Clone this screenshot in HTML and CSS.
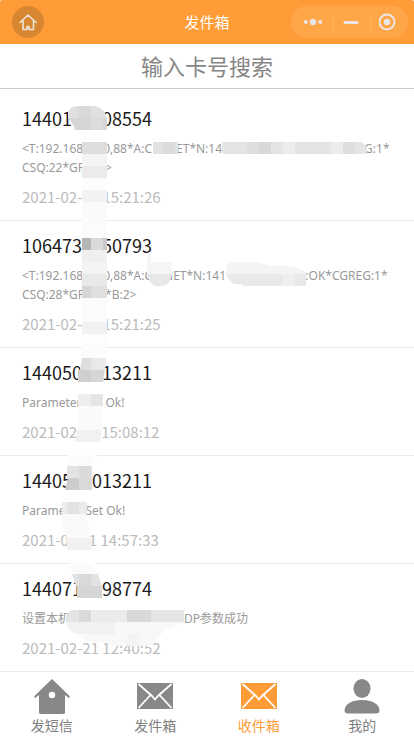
FILE: index.html
```html
<!DOCTYPE html>
<html lang="zh-CN">
<head>
<meta charset="utf-8">
<meta name="viewport" content="width=device-width, initial-scale=1">
<title>发件箱</title>
<link rel="stylesheet" href="styles.css">
</head>
<body>
<div class="app">
  <header class="topbar">
    <button class="home" type="button" aria-label="首页">
      <svg width="32" height="32" viewBox="0 0 32 32"><path d="M8 16.500 16 9l8 7.500M11 14.500V23.500h4v-3h2v3h4.500v-9" fill="none" stroke="#eee4da" stroke-width="1.600" stroke-linejoin="round" stroke-linecap="round"/></svg>
    </button>
    <h1 class="title">发件箱</h1>
    <div class="capsule">
      <button type="button" aria-label="更多"><svg width="20" height="20" viewBox="0 0 20 20" fill="#e9e6e3"><circle cx="2.800" cy="10" r="2"/><circle cx="10" cy="10" r="3.200"/><circle cx="17.200" cy="10" r="2"/></svg></button>
      <button type="button" aria-label="最小化"><svg width="20" height="20" viewBox="0 0 20 20"><path d="M3 10.500h12" stroke="#e9e6e3" stroke-width="3" stroke-linecap="round"/></svg></button>
      <button type="button" aria-label="关闭"><svg width="20" height="20" viewBox="0 0 20 20"><circle cx="8" cy="10" r="7.500" fill="none" stroke="#e9e6e3" stroke-width="2"/><circle cx="8" cy="10" r="3.200" fill="#e9e6e3"/></svg></button>
    </div>
  </header>
  <form class="search"><input type="text" aria-label="输入卡号搜索" placeholder="输入卡号搜索"></form>

  <main class="list">
    <article class="item">
      <h2>14401<span class="gap w30"></span>08554</h2>
      <p class="msg">&lt;T:192.168<span class="gap w20"></span>0,88*A:C<span class="gap w24"></span>ET*N:14<span class="gap w142"></span>G:1*<br>CSQ:22*GP<span class="gap w20"></span>&gt;</p>
      <time>2021-02-<span class="gap w20"></span>15:21:26</time>
      <svg class="mask" width="414" height="127" viewBox="0 94 414 127" aria-hidden="true">
        <path d="M68 118V112Q70 106 78 106H95Q104 108 107 118Z" fill="#e0e0e0"/><path d="M68 118H107V130H75Q74 124 68 118Z" fill="#d6d6d6"/><path d="M79 106h12v12H79z" fill="#d9d9d9"/><path d="M91 118h12v12H91z" fill="#dcdcdc"/>
        <path d="M82 142h25v12H82z" fill="#dedede"/><path d="M82 154h25v12H82z" fill="#f4f4f4"/><path d="M82 166h25v12H82z" fill="#ebebeb"/><path d="M82 178h25v12H82z" fill="#fdfdfd"/><path d="M82 190h25v12H82z" fill="#f2f2f2"/><path d="M82 202h25v18H82z" fill="#fafafa"/>
        <path d="M153 142h25v12H153z" fill="#e2e2e2"/><path d="M163 142h12v12H163z" fill="#dcdcdc"/>
        <path d="M222 142H361Q365 144 367 148V154H224Q222 154 222 150Z" fill="#e4e4e4"/><path d="M247 142h12v12H247z" fill="#dedede"/><path d="M259 142h12v12H259z" fill="#d8d8d8"/><path d="M283 142h12v12H283zM331 142h12v12H331z" fill="#ececec"/><path d="M343 142h12v12H343z" fill="#dedede"/>
      </svg>
    </article>
    <article class="item">
      <h2>106473<span class="gap w20"></span>50793</h2>
      <p class="msg">&lt;T:192.168<span class="gap w20"></span>0,88*A:C<span class="gap w12"></span>NET*N:141<span class="gap w72"></span>P:OK*CGREG:1*<br>CSQ:28*GP<span class="gap w20"></span>*B:2&gt;</p>
      <time>2021-02-<span class="gap w20"></span>15:21:25</time>
      <svg class="mask" width="414" height="127" viewBox="0 221 414 127" aria-hidden="true">
        <path d="M82 220h25v18H82z" fill="#fbfbfb"/><path d="M82 238h9v12h-9z" fill="#b5b5b5"/><path d="M91 238h12v12H91z" fill="#dadada"/><path d="M103 238h4v12h-4z" fill="#c9c9c9"/><path d="M82 250h25v12H82z" fill="#efefef"/><path d="M82 262h25v12H82z" fill="#f4f4f4"/><path d="M82 274h25v12H82z" fill="#e9e9e9"/><path d="M82 286h25v12H82z" fill="#e0e0e0"/><path d="M82 286h9v12h-9z" fill="#d6d6d6"/><path d="M82 298h25v24H82z" fill="#fbfbfb"/><path d="M82 322h25v12H82z" fill="#f2f2f2"/><path d="M82 334h25v14H82z" fill="#fdfdfd"/>
        <path d="M147 274V256Q149 250 151 253V262H172V274Z" fill="#f5f5f5"/><path d="M147 274H172Q170 286 162 286H155Q149 283 147 274Z" fill="#e8e8e8"/>
        <path d="M226 274V267Q228 262 234 262H257L272 266H284Q302 268 306 274Z" fill="#f4f4f4"/><path d="M226 274H306V286H244L240 284H235Q229 282 226 274Z" fill="#e9e9e9"/><path d="M283 274h12v12H283z" fill="#efefef"/>
      </svg>
    </article>
    <article class="item">
      <h2>144050<span class="gap w20"></span>13211</h2>
      <p class="msg">Parameter<span class="gap w24"></span>Ok!</p>
      <time>2021-02<span class="gap w24"></span>15:08:12</time>
      <svg class="mask" width="414" height="108" viewBox="0 348 414 108" aria-hidden="true">
        <path d="M82 348H105V358H82z" fill="#fcfcfc"/><path d="M82 358H106L105 370H80Z" fill="#dedede"/><path d="M91 358H106L105 370H91Z" fill="#e9e9e9"/><path d="M80 370H105L103 382H78Z" fill="#d6d6d6"/><path d="M78 370H91V382H78Z" fill="#cfcfcf"/>
        <path d="M78 394h25v12H78z" fill="#eee"/><path d="M91 394h12v12H91z" fill="#e5e5e5"/><path d="M78 406h24v24H78z" fill="#fafafa"/><path d="M77 430H102L100 442H75Z" fill="#f1f1f1"/><path d="M68 454h29v3H68z" fill="#fdfdfd"/>
      </svg>
    </article>
    <article class="item">
      <h2>14405<span class="gap w20"></span>013211</h2>
      <p class="msg">Parame<span class="gap w20"></span>Set Ok!</p>
      <time>2021-0<span class="gap w20"></span>1 14:57:33</time>
      <svg class="mask" width="414" height="108" viewBox="0 456 414 108" aria-hidden="true">
        <path d="M67 456H94L92 466H67z" fill="#fcfcfc"/><path d="M67 466h25v12H67z" fill="#e3e3e3"/><path d="M79 466h12v12H79z" fill="#dadada"/><path d="M68 478H92V490H65Z" fill="#cdcdcd"/><path d="M79 478h13v12H79z" fill="#d9d9d9"/>
        <path d="M62 502h25v12H62z" fill="#ebebeb"/><path d="M67 502h12v12H67z" fill="#e2e2e2"/><path d="M62 514H85Q90 525 90 538H67Q62 530 62 514Z" fill="#fafafa"/><path d="M67 538h25v12H67z" fill="#f1f1f1"/><path d="M69 562h26v3H69z" fill="#fdfdfd"/>
      </svg>
    </article>
    <article class="item">
      <h2>144071<span class="gap w20"></span>98774</h2>
      <p class="msg">设置本机<span class="gap w114"></span>DP参数成功</p>
      <time>2021-02-21 12:40:52</time>
      <svg class="mask" width="414" height="108" viewBox="0 564 414 108" aria-hidden="true">
        <path d="M70 564H91L99 574H73z" fill="#fbfbfb"/><path d="M72 574H98L102 586H76Z" fill="#e2e2e2"/><path d="M79 574h12v12H79z" fill="#d9d9d9"/><path d="M77 586h25v12H77z" fill="#d6d6d6"/>
        <path d="M66 622V617Q68 610 74 610H184V622Z" fill="#e5e5e5"/><path d="M79 610h12v12H79z" fill="#dadada"/><path d="M91 610h36v12H91z" fill="#ebebeb"/><path d="M127 610h24v12H127z" fill="#d9d9d9"/>
        <path d="M66 622H184Q175 627 164 630L158 638Q152 646 144 646H112Q108 642 95 642Q82 641 79 634Q69 634 66 622Z" fill="#f8f8f8"/><path d="M66 622H115V634H79Q69 634 66 622Z" fill="#f1f1f1"/><path d="M127 634h12v12H127z" fill="#f3f3f3"/>
      </svg>
    </article>
  </main>

  <nav class="tabs" aria-label="主导航">
    <a href="#compose"><svg width="36" height="36" viewBox="0 0 36 36"><path fill="#888" fill-rule="evenodd" d="M18 0 35.500 17V19.500L31 16V33.500Q31 35 29.500 35H6.500Q5 35 5 33.500V16L.5 19.500V17ZM18 12.800a3.200 3.200 0 1 0 0 6.400 3.200 3.200 0 0 0 0-6.400Z"/></svg><span>发短信</span></a>
    <a href="#outbox"><svg width="36" height="36" viewBox="0 0 36 36"><path fill="#888" d="M0 4h36v26H0z"/><path d="M1.500 5 14.500 16.500 18 20.500 21.500 16.500 34.500 5M1.500 29 13.500 16M34.500 29 22.500 16" fill="none" stroke="#fff" stroke-width="1.800"/></svg><span>发件箱</span></a>
    <a class="active" href="#inbox" aria-current="page"><svg width="36" height="36" viewBox="0 0 36 36"><path fill="#ff9c38" d="M0 4h36v26H0z"/><path d="M1.500 5 14.500 16.500 18 20.500 21.500 16.500 34.500 5M1.500 29 13.500 16M34.500 29 22.500 16" fill="none" stroke="#fff" stroke-width="1.800"/></svg><span>收件箱</span></a>
    <a href="#me"><svg width="36" height="36" viewBox="0 0 36 36" fill="#888"><ellipse cx="18" cy="9.500" rx="8.500" ry="9.500"/><path d="M.5 31C1 25 8 21 18 21S35 25 35.500 31Q35.500 34.500 32 34.500H4Q.5 34.500 .5 31Z"/></svg><span>我的</span></a>
  </nav>
</div>
</body>
</html>
```
FILE: styles.css
```css
* { box-sizing: border-box; }
body {
  margin: 0;
  background: #fff;
  font-family: "Noto Sans CJK SC", sans-serif;
  overflow-x: hidden;
}
h1, h2, p { margin: 0; font-weight: 400; }
button { border: 0; padding: 0; background: none; display: grid; place-items: center; }
svg { display: block; }
.app { min-height: 100vh; display: flex; flex-direction: column; }

.topbar {
  display: grid;
  grid-template-columns: 1fr auto 1fr;
  align-items: center;
  height: 44px;
  padding: 0 6px;
  background: #ff9c38;
  border-radius: 2px 2px 0 0;
}
.home {
  width: 32px;
  height: 32px;
  margin-left: 6px;
  border-radius: 50%;
  background: #d88630;
}
.title { font-size: 15px; line-height: 24px; color: #fff; }
.capsule {
  justify-self: end;
  display: grid;
  grid-template-columns: 41px 37px 37px;
  height: 32px;
  border: 1px solid #ffa850;
  border-radius: 16px;
  background: #ffa649;
}
.capsule button + button { background: linear-gradient(#ffb366, #ffb366) left center / 1px 18px no-repeat; }

.search { border-bottom: 1px solid #ccc; }
.search input {
  display: block;
  width: 100%;
  height: 44px;
  border: 0;
  padding: 0 0 2px;
  outline: 0;
  background: #fff;
  font: 22px "Noto Sans CJK SC", sans-serif;
  text-align: center;
}
.search input::placeholder { color: #858585; opacity: 1; }

.list { padding-top: 5px; flex: 1; }
.item {
  position: relative;
  padding: 11px 22px;
  border-bottom: 1px solid #ececec;
}
.item h2 { font-size: 18px; line-height: 26px; color: #1a1a1a; }
.msg {
  margin: 8px 0;
  font-family: "Noto Sans", "Noto Sans CJK SC", sans-serif;
  font-size: 12px;
  line-height: 19px;
  color: #999;
  white-space: nowrap;
}
.item time { display: block; font-size: 15px; line-height: 24px; color: #bbb; }
.mask { position: absolute; left: 0; top: 0; overflow: visible; pointer-events: none; }

.gap { display: inline-block; }
.w12 { width: 12px; }
.w20 { width: 20px; }
.w24 { width: 24px; }
.w30 { width: 30px; }
.w72 { width: 72px; }
.w114 { width: 114px; }
.w142 { width: 142px; }

.tabs { display: grid; grid-template-columns: repeat(4, 1fr); height: 64px; }
.tabs a {
  display: flex;
  flex-direction: column;
  align-items: center;
  padding-top: 7px;
  font-size: 14px;
  line-height: 20px;
  color: #808080;
  text-decoration: none;
}
.tabs .active { color: #ff9c38; }
```
